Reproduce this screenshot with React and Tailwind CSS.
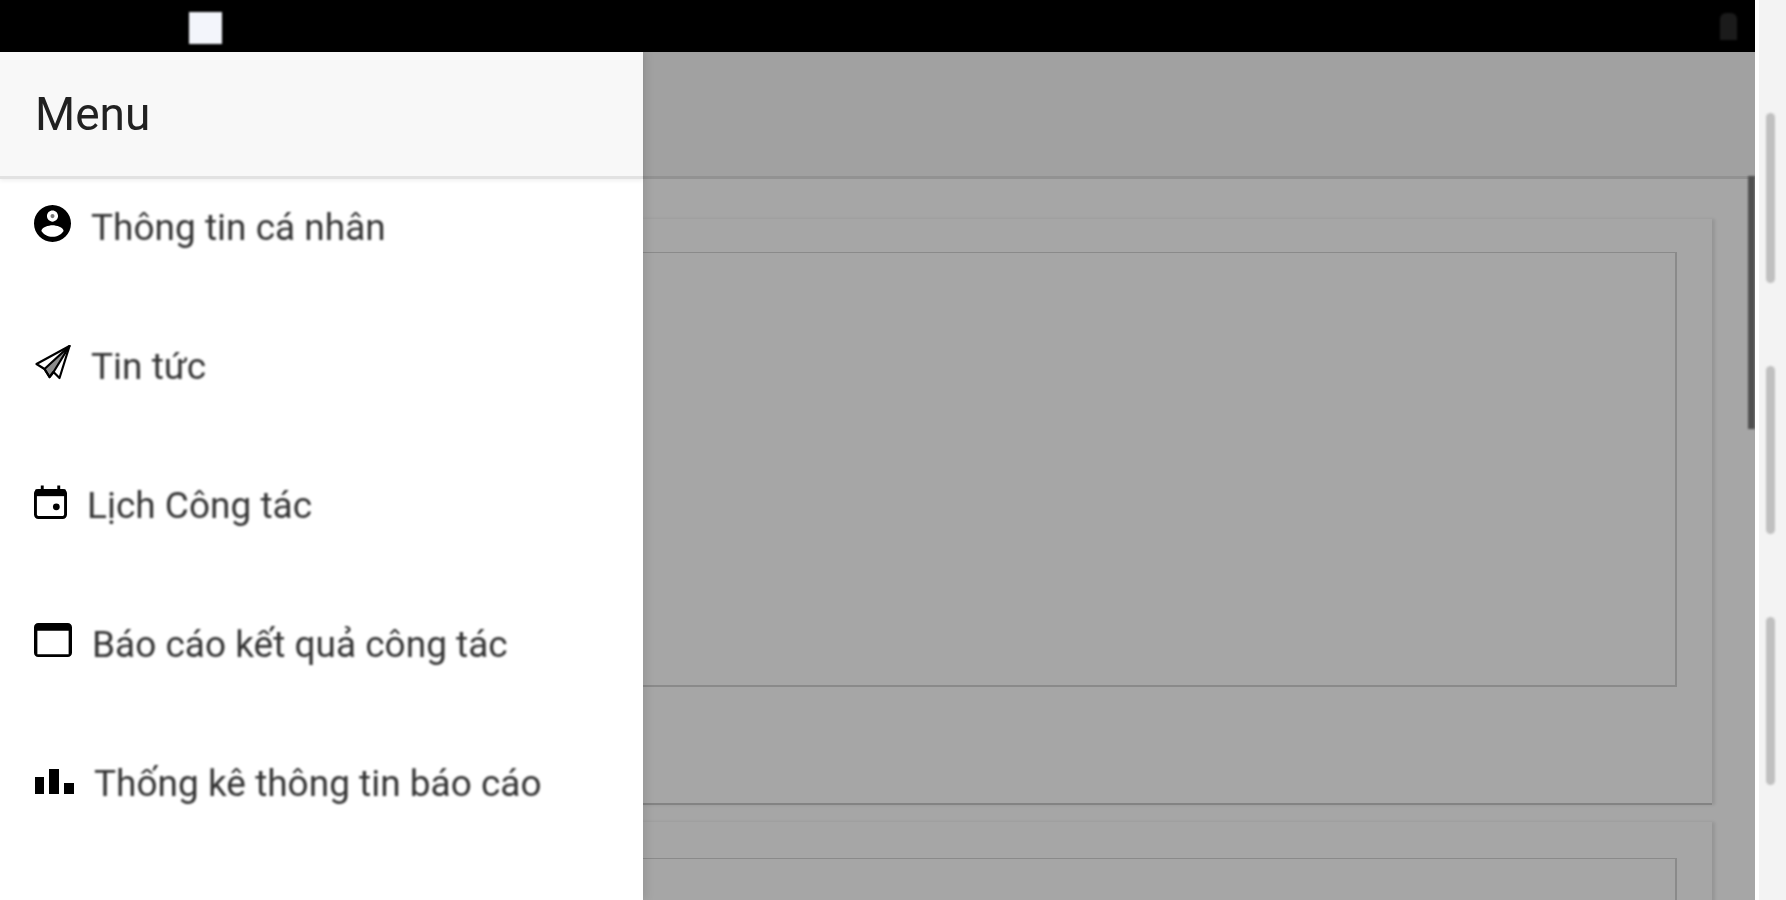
import React from "react";

const items = [
  {
    label: "Thông tin cá nhân",
    icon: (
      <svg viewBox="2 2 20 20" className="w-[37px] h-[37px] -mt-2 shrink-0 blur-[0.5px]" fill="#000">
        <path d="M12 2C6.48 2 2 6.48 2 12s4.48 10 10 10 10-4.48 10-10S17.52 2 12 2zm0 3c1.66 0 3 1.34 3 3s-1.34 3-3 3-3-1.34-3-3 1.34-3 3-3zm0 14.2c-2.5 0-4.71-1.28-6-3.2.03-2 4-3.1 6-3.1s5.97 1.1 6 3.1c-1.29 1.92-3.5 3.2-6 3.2z" />
        <circle cx="12" cy="8" r="1.1" fill="#777" />
      </svg>
    ),
  },
  {
    label: "Tin tức",
    icon: (
      <svg viewBox="0 0 36 36" className="w-[37px] h-[36px] -mt-1.5 shrink-0 blur-[0.5px]" fill="none" stroke="#000" strokeWidth="2.2" strokeLinejoin="round">
        <path d="M35 1 L2 19 L10 24 L15 32 L19 27 L25 33 Z" />
        <path d="M35 1 L10 24 L15 32 L19 27 Z" fill="#000" fillOpacity="0.45" />
      </svg>
    ),
  },
  {
    label: "Lịch Công tác",
    icon: (
      <svg viewBox="0 0 34 36" className="w-[33px] h-[36px] -mt-1.5 shrink-0 blur-[0.5px]" fill="#000">
        <rect x="1.5" y="6" width="31" height="28" rx="3" fill="none" stroke="#000" strokeWidth="3" />
        <rect x="1.5" y="5" width="31" height="7" />
        <rect x="7" y="1" width="3" height="6" />
        <rect x="24" y="1" width="3" height="6" />
        <circle cx="23" cy="23" r="3.5" />
      </svg>
    ),
  },
  {
    label: "Báo cáo kết quả công tác",
    icon: (
      <svg viewBox="3 4 18 16" className="w-[38px] h-[34px] -mt-2 shrink-0 blur-[0.5px]" fill="#000">
        <path d="M19 4H5c-1.11 0-2 .9-2 2v12c0 1.1.89 2 2 2h14c1.1 0 2-.9 2-2V6c0-1.1-.89-2-2-2zm0 14.7H4.6V7.6h14.8v11.1z" />
      </svg>
    ),
  },
  {
    label: "Thống kê thông tin báo cáo",
    icon: (
      <svg viewBox="0 0 40 25" className="w-[40px] h-[25px] -mt-1 shrink-0 blur-[0.5px]" fill="#000">
        <rect x="1" y="8" width="9" height="17" />
        <rect x="15" y="0" width="10" height="25" />
        <rect x="30" y="14" width="10" height="11" />
      </svg>
    ),
  },
];

function Card({ className }) {
  return (
    <div className={`bg-[#a6a6a6] pl-[40px] pr-[35px] border-b-2 border-[#838383] shadow-[3px_0_3px_rgba(0,0,0,0.1)] ${className}`}>
      <div className="h-[435px] border border-[#8a8a8a] border-r-2 border-b-2" />
    </div>
  );
}

export default function App() {
  return (
    <div className="relative flex w-full h-[900px] overflow-hidden bg-[#f3f3f3] font-['Roboto',sans-serif]">
      <div className="relative w-[1755px] h-full flex flex-col bg-[#a6a6a6] overflow-hidden shrink-0">
        <div className="h-[52px] shrink-0 bg-black flex items-center justify-between pl-[189px] pr-[18px]">
          <div className="w-[33px] h-[32px] mt-1 bg-[#f3f5fb] blur-[0.8px]" />
          <div className="w-[17px] h-[27px] bg-[#1b1b1b] rounded-t-[6px] blur-[0.8px]" />
        </div>
        <div className="h-[127px] shrink-0 bg-[#a1a1a1] border-b-[3px] border-[#929292]" />
        <div className="flex flex-col gap-[17px] pl-[20px] pr-[43px] pt-[40px]">
          <Card className="pt-[33px] pb-[116px]" />
          <Card className="pt-[36px] pb-[116px]" />
        </div>
        <div className="absolute right-0 top-[176px] w-[7px] h-[253px] bg-[#505050] blur-[0.8px]" />
      </div>

      <div className="flex-1 border-l-[4px] border-white flex justify-center">
        <div className="flex flex-col gap-[83px] pt-[113px] pr-[4px]">
          <div className="w-[9px] h-[170px] rounded-full bg-[#c0c0c0] blur-[0.8px]" />
          <div className="w-[9px] h-[168px] rounded-full bg-[#c0c0c0] blur-[0.8px]" />
          <div className="w-[9px] h-[168px] rounded-full bg-[#c0c0c0] blur-[0.8px]" />
        </div>
      </div>

      <aside className="absolute left-0 top-[52px] bottom-0 w-[643px] bg-white flex flex-col shadow-[4px_0_8px_rgba(0,0,0,0.08)]">
        <div className="h-[127px] shrink-0 bg-[#f8f8f8] flex items-center pl-[35px] border-b-[3px] border-[#e2e2e2] shadow-[0_2px_4px_rgba(0,0,0,0.06)] z-10">
          <span className="text-[46px] leading-none text-[#212121] blur-[0.7px]">Menu</span>
        </div>
        <nav className="flex flex-col gap-[89px] pt-[23px]">
          {items.map((item) => (
            <div key={item.label} className="h-[50px] flex items-center gap-5 pl-[34px]">
              {item.icon}
              <span className="text-[37px] leading-none text-[#333333] blur-[0.8px] whitespace-nowrap">{item.label}</span>
            </div>
          ))}
        </nav>
      </aside>
    </div>
  );
}
